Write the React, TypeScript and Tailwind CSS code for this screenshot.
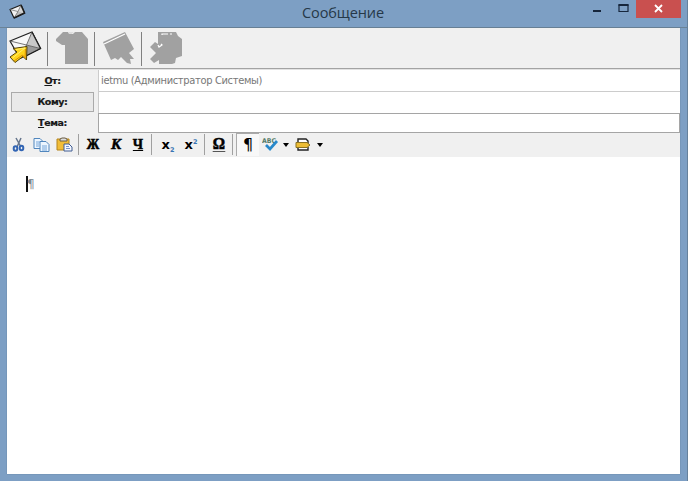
import type { ReactNode } from 'react';

const serif = "font-['Liberation_Serif',serif]";
const label = "font-['DejaVu_Sans',sans-serif] text-[9.5px] leading-[12px] font-bold text-[#171717] tracking-[-0.4px] [-webkit-text-stroke:0.2px]";

function Envelope({ className }: { className: string }) {
  return (
    <svg className={className} viewBox="0 0 17 16">
      <path d="M1 5.500 12 1 15.500 9 5 14Z" fill="#f2f2f2" stroke="#1d1d1d" strokeWidth="1.2" strokeLinejoin="round" />
      <path d="M12 1 15.500 9 9 7.500Z" fill="#d4d4d4" />
      <path d="M5 14 9 7.500 15.500 9Z" fill="#bcbcbc" />
      <path d="M1 5.500 9 7.500 12 1M9 7.500 5 14" fill="none" stroke="#666" strokeWidth=".7" />
      <path d="M12 1 15.500 9 5 14" fill="none" stroke="#1d1d1d" strokeWidth="1.6" />
    </svg>
  );
}

function SendIcon() {
  return (
    <svg className="ml-[2px] mt-[3px] h-[33px] w-[34px] shrink-0" viewBox="0 0 34 33">
      <path d="M1 10 23 1 31.500 17.500 11 27.500Z" fill="#f8f8f8" stroke="#222" strokeWidth="1.2" />
      <path d="M23 1 31.500 17.500 17.500 14Z" fill="#c8c8c8" />
      <path d="M31.500 17.500 17.500 14 14 26Z" fill="#9a9a9a" />
      <path d="M1 10 17.500 14 23 1M17.500 14 31.500 17.500M17.500 14 12 24" fill="none" stroke="#555" strokeWidth=".8" />
      <path d="M23 1 31.500 17.500 15 26" fill="none" stroke="#202020" strokeWidth="1.3" />
      <path d="M4 17.500 18 15.500 17.500 29 14 25.500 6 31.500 1 26 8 21Z" fill="#ffd51b" stroke="#51400a" strokeLinejoin="round" />
      <path d="m7 18.500 9-1.500L3.500 27" fill="none" stroke="#fff071" />
      <path d="m16.500 18-.5 9-2.500-3L5 30" fill="none" stroke="#d78d04" />
    </svg>
  );
}

function Divider() {
  return <div className="mt-[4px] h-[34px] w-px shrink-0 bg-[#808080]" />;
}

function SmallDivider({ className = '' }: { className?: string }) {
  return <div className={`mt-px h-[21px] w-px shrink-0 bg-[#a0a0a0] ${className}`} />;
}

function TitleBar() {
  return (
    <header className="flex h-[28px] shrink-0 items-start border-b border-[#6b8397]">
      <Envelope className="ml-[9px] mt-[4px] h-[16px] w-[17px]" />
      <h1 className="ml-[276px] mt-[3px] w-[84px] whitespace-nowrap font-['Open_Sans',sans-serif] text-[14.5px] leading-[19px] tracking-[-0.1px] text-[#263848]">Сообщение</h1>
      <svg className="ml-[206px] mt-[3px] h-[14px] w-[42px]" viewBox="0 0 42 14">
        <path d="M1 8H9" stroke="#16263c" strokeWidth="2" />
        <path d="M27 2H36V8.500H27Z" fill="none" stroke="#16263c" strokeWidth="1.2" />
        <path d="M26.500 2H36.500" stroke="#16263c" strokeWidth="2" />
      </svg>
      <div className="ml-[2px] flex h-[18px] w-[45px] justify-center bg-[#c9504f]">
        <svg className="mt-[4px] h-[9px] w-[9px]" viewBox="0 0 9 9"><path d="m1 1 7 7M8 1 1 8" stroke="#fff" strokeWidth="1.8" /></svg>
      </div>
    </header>
  );
}

function MainToolbar() {
  return (
    <div className="flex h-[42px] shrink-0 border-b border-[#e3e3e3] bg-[#f0f0f0]">
      <div className="flex flex-1 border-b border-[#a3a3a3]">
        <SendIcon />
        <div className="ml-[4px] flex"><Divider /></div>
        <svg className="ml-[8px] mt-[3px] h-[34px] w-[34px]" viewBox="0 0 34 34">
          <path d="M7 1h5l1 2h4l2-2h7l6 7v25H9V14H6L0 10V8Z" fill="#a1a1a1" />
          <path d="M12 1.500h5l-1 1h-3" fill="none" stroke="#ddd" />
        </svg>
        <div className="ml-[4px] flex"><Divider /></div>
        <svg className="ml-[8px] mt-[3px] h-[34px] w-[34px]" viewBox="0 0 34 34">
          <path d="M0 11 22 1 31 18 26 22 31 28 27 28 28 33 24 32 18 26 15 29 12 27 8 29Z" fill="#a1a1a1" />
          <path d="m1 13 21-10" stroke="#fff" strokeWidth="1.2" />
        </svg>
        <div className="ml-[4px] flex"><Divider /></div>
        <svg className="ml-[8px] mt-[3px] h-[34px] w-[34px]" viewBox="0 0 34 34">
          <path d="M8 1h18l2 4 4 3v17l-6 2-1 5-3 1H9v-4l-5 3-4-4 6-6-6-6 5-5 3 2Z" fill="#a1a1a1" />
          <path d="M12 4V3h6m2 0h2M8 14l1 2 3-2-1-1" fill="none" stroke="#fff" strokeWidth="1.2" />
        </svg>
      </div>
    </div>
  );
}

function MessageFields() {
  return (
    <div className="grid h-[63px] shrink-0 grid-cols-[91px_1fr] bg-[#f0f0f0]">
      <div className="flex flex-col">
        <div className={`h-[22px] pt-[5px] text-center ${label}`}><span className="underline">О</span>т:</div>
        <button className={`ml-[4px] flex h-[20px] w-[83px] items-center justify-center border border-[#aaa] bg-[#e9e9e9] ${label}`}>Кому:</button>
        <div className={`pt-[5px] text-center ${label}`}><span className="underline">Т</span>ема:</div>
      </div>
      <div className="flex flex-col">
        <div className="h-[22px] border-b border-l border-[#ccc] bg-white pl-[2px] pt-[3px] font-['DejaVu_Sans_Condensed','DejaVu_Sans',sans-serif] text-[11px] leading-[15px] tracking-[-0.33px] text-[#777]">ietmu (Администратор Системы)</div>
        <div className="h-[21px] border-l border-[#ccc] bg-white" />
        <div className="h-[20px] border border-[#a5a5a5] bg-white" />
      </div>
    </div>
  );
}

function Tool({ children, className = '' }: { children: ReactNode; className?: string }) {
  return <div className={`flex h-[23px] shrink-0 items-center justify-center text-black ${className}`}>{children}</div>;
}

function XMark() {
  return <span className="text-[13px] font-bold leading-[15px]">x</span>;
}

function FormatToolbar() {
  return (
    <div className="flex h-[24px] shrink-0 bg-[#f0f0f0]">
      <Tool className="ml-[4px] w-[16px]"><svg className="h-[15px] w-[14px]" viewBox="0 0 14 15"><path d="m4 1 5 9M9 1 5 10" stroke="#65758c" strokeWidth="1.5" /><g fill="none" stroke="#3265b4" strokeWidth="2"><ellipse cx="3.500" cy="11.500" rx="1.800" ry="2.200" /><ellipse cx="9.500" cy="11" rx="1.800" ry="2.200" /></g></svg></Tool>
      <Tool className="ml-[6px] w-[17px]"><svg className="h-[14px] w-[17px]" viewBox="0 0 17 14"><g fill="#edf6ff" stroke="#5186bd"><path d="M1 .5h6l3 3v7H1Z" /><path d="M7 3.500h6l3 3v7H7Z" /></g><path d="M3 4h4M3 6h3M3 8h3M9 8h5M9 10h5M9 12h5" stroke="#77a6d9" /></svg></Tool>
      <Tool className="ml-[6px] w-[17px]"><svg className="h-[15px] w-[17px]" viewBox="0 0 17 15"><path d="M1 2h12v11H1Z" fill="#f1bd38" stroke="#b4841c" /><path d="M4 4V2l2-1h3l2 1v2Z" fill="#ddd" stroke="#685c45" /><path d="M8 7h5l3 3v4H8Z" fill="#f4f7ff" stroke="#405c91" /><path d="M10 9.500h3M10 11.500h4" stroke="#7894c9" /></svg></Tool>
      <SmallDivider className="ml-[5px]" />
      <Tool className={`ml-[7px] w-[14px] text-[14px] font-bold [-webkit-text-stroke:0.6px] ${serif}`}><span className="inline-block scale-x-90">Ж</span></Tool>
      <Tool className={`ml-[9px] w-[14px] text-[15px] font-bold italic [-webkit-text-stroke:0.5px] ${serif}`}>К</Tool>
      <Tool className={`ml-[9px] w-[12px] text-[14px] font-bold underline underline-offset-1 [-webkit-text-stroke:0.5px] ${serif}`}>Ч</Tool>
      <SmallDivider className="ml-[7px]" />
      <Tool className="ml-[8px] w-[16px] font-['DejaVu_Sans',sans-serif]"><XMark /><span className="self-end text-[6.5px] font-bold leading-[12px] text-[#3976b4]">2</span></Tool>
      <Tool className="ml-[7px] w-[16px] font-['DejaVu_Sans',sans-serif]"><XMark /><span className="mt-[4px] self-start text-[6.5px] font-bold leading-[11px] text-[#3976b4]">2</span></Tool>
      <SmallDivider className="ml-[5px]" />
      <Tool className={`ml-[6px] w-[15px] text-[17px] font-bold [-webkit-text-stroke:0.6px] ${serif}`}><span className="inline-block scale-x-90 border-b border-[#555] leading-[14px]">Ω</span></Tool>
      <SmallDivider className="ml-[6px]" />
      <Tool className="ml-[3px] w-[23px] border-l border-t border-[#aaa] bg-[#f8f8f8] font-['DejaVu_Sans',sans-serif] text-[16px]">¶</Tool>
      <Tool className="ml-[3px] w-[18px]"><svg className="h-[17px] w-[18px]" viewBox="0 0 18 17"><text x="0" y="7" fill="#557b69" fontFamily="DejaVu Sans" fontWeight="bold" fontSize="6.5" textLength="14" lengthAdjust="spacingAndGlyphs">ABC</text><path d="m4 9 4 4 7-8" fill="none" stroke="#2889cb" strokeWidth="2.7" /></svg></Tool>
      <Tool className="ml-[3px] w-[6px]"><svg className="h-[4px] w-[6px]" viewBox="0 0 6 4"><path d="M0 0h6L3 4Z" /></svg></Tool>
      <Tool className="ml-[6px] w-[16px]"><svg className="h-[15px] w-[16px]" viewBox="0 0 16 15"><path d="M3 6V2h8l2 2v3M3 10v3h10v-3" fill="#fff" stroke="#222" strokeWidth="1.4" /><path d="M1 5.500h11l3 2.500-3 2.500H1Z" fill="#edbd35" stroke="#8b7221" /></svg></Tool>
      <Tool className="ml-[6px] w-[6px]"><svg className="h-[4px] w-[6px]" viewBox="0 0 6 4"><path d="M0 0h6L3 4Z" /></svg></Tool>
    </div>
  );
}

export default function App() {
  return (
    <div className="flex h-[481px] w-[688px] flex-col overflow-hidden border-r border-[#65819c] bg-[#7d9fc4]">
      <TitleBar />
      <main className="ml-[7px] flex h-[446px] w-[673px] flex-col bg-white shadow-[0_0_1px_#536f87]">
        <MainToolbar />
        <MessageFields />
        <FormatToolbar />
        <div className="flex flex-1 items-start pl-[19px] pt-[19px]">
          <div className="h-[16px] w-[2px] bg-[#111]" />
          <span className="ml-[-1px] font-['DejaVu_Sans',sans-serif] text-[12px] leading-[16px] text-[#7f8991]">¶</span>
        </div>
      </main>
    </div>
  );
}
